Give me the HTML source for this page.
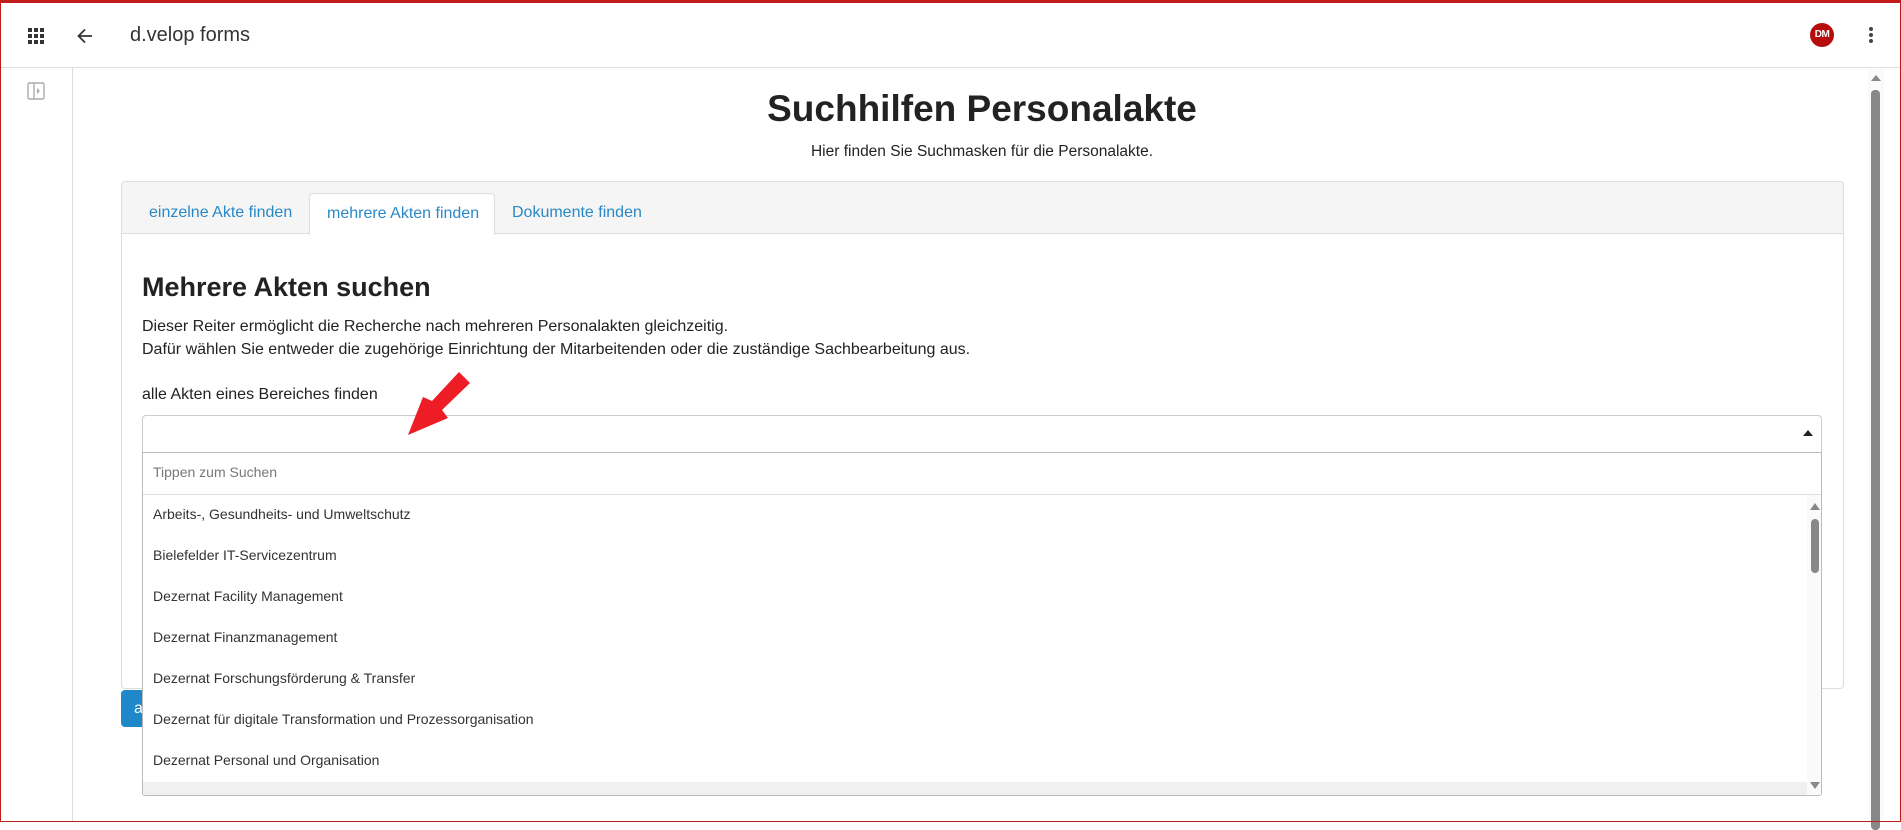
<!DOCTYPE html>
<html><head><meta charset="utf-8">
<style>
*{box-sizing:border-box;margin:0;padding:0}
body{width:1901px;height:822px;overflow:hidden;background:#fff;font-family:"Liberation Sans",Arial,sans-serif;color:#222;position:relative}
.frame{position:absolute;inset:0;border:1px solid #c21b1b;border-top:3px solid #c21b1b;pointer-events:none;z-index:50}
.hdr{position:absolute;left:0;top:0;width:1901px;height:68px;border-bottom:1px solid #ddd}
.side{position:absolute;left:0;top:68px;width:73px;height:754px;border-right:1px solid #ddd}
.abs{position:absolute}
.tab{position:absolute;top:193px;height:42px;line-height:40px;font-size:16px;color:#2a88c6;padding:0 17px;white-space:nowrap}
.item{position:absolute;left:153px;font-size:14px;color:#333;white-space:nowrap}
</style></head><body>
<div class="frame"></div>
<div class="hdr">
  <svg class="abs" style="left:28px;top:28px" width="16" height="16" viewBox="0 0 16 16" fill="#333">
    <rect x="0" y="0" width="4" height="4"/><rect x="6" y="0" width="4" height="4"/><rect x="12" y="0" width="4" height="4"/>
    <rect x="0" y="6" width="4" height="4"/><rect x="6" y="6" width="4" height="4"/><rect x="12" y="6" width="4" height="4"/>
    <rect x="0" y="12" width="4" height="4"/><rect x="6" y="12" width="4" height="4"/><rect x="12" y="12" width="4" height="4"/>
  </svg>
  <svg class="abs" style="left:76px;top:27px" width="18" height="18" viewBox="0 0 18 18"><path d="M16 9H3M9 2.5L2.5 9 9 15.5" stroke="#333" stroke-width="1.8" fill="none"/></svg>
  <div class="abs" style="left:130px;top:24px;font-size:20px;color:#333">d.velop forms</div>
  <div class="abs" style="left:1810px;top:23px;width:24px;height:24px;border-radius:50%;background:#b50d0d;color:#fff;font-size:10px;font-weight:bold;text-align:center;line-height:24px;letter-spacing:-0.5px">DM</div>
  <svg class="abs" style="left:1867px;top:26px" width="8" height="18"><circle cx="4" cy="3" r="2" fill="#444"/><circle cx="4" cy="9" r="2" fill="#444"/><circle cx="4" cy="15" r="2" fill="#444"/></svg>
</div>
<div class="side">
  <svg class="abs" style="left:27px;top:14px" width="18" height="18" viewBox="0 0 18 18"><rect x="1" y="1" width="16" height="16" rx="1.5" fill="none" stroke="#aaa" stroke-width="1.4"/><line x1="7" y1="1" x2="7" y2="17" stroke="#aaa" stroke-width="1.4"/><path d="M10 6l3 3-3 3z" fill="#aaa"/></svg>
</div>
<div class="abs" style="left:1868px;top:69px;width:16px;height:753px;background:#fafafa"></div>
<svg class="abs" style="left:1870px;top:74px" width="12" height="8"><path d="M1 7L6 1 11 7z" fill="#888"/></svg>
<div class="abs" style="left:1871px;top:90px;width:9px;height:740px;background:#888;border-radius:4px"></div>

<div class="abs" style="left:0;width:1964px;top:88px;text-align:center;font-size:37px;font-weight:bold;color:#222">Suchhilfen Personalakte</div>
<div class="abs" style="left:0;width:1964px;top:143px;text-align:center;font-size:15.5px;color:#222">Hier finden Sie Suchmasken für die Personalakte.</div>

<div class="abs" style="left:121px;top:181px;width:1723px;height:508px;border:1px solid #ddd;border-radius:4px;background:#fff"></div>
<div class="abs" style="left:122px;top:182px;width:1721px;height:52px;background:#f5f5f5;border-bottom:1px solid #ddd;border-radius:4px 4px 0 0"></div>
<div class="tab" style="left:132px">einzelne Akte finden</div>
<div class="tab" style="left:309px;width:186px;padding:0 0 0 17px;background:#fff;border:1px solid #ddd;border-bottom:none;border-radius:4px 4px 0 0">mehrere Akten finden</div>
<div class="tab" style="left:495px">Dokumente finden</div>

<div class="abs" style="left:142px;top:272px;font-size:27px;font-weight:bold;color:#222">Mehrere Akten suchen</div>
<div class="abs" style="left:142px;top:315px;font-size:16px;line-height:23px;color:#222;white-space:nowrap">Dieser Reiter ermöglicht die Recherche nach mehreren Personalakten gleichzeitig.<br>Dafür wählen Sie entweder die zugehörige Einrichtung der Mitarbeitenden oder die zuständige Sachbearbeitung aus.</div>
<div class="abs" style="left:142px;top:386px;font-size:16px;color:#222">alle Akten eines Bereiches finden</div>

<div class="abs" style="left:142px;top:415px;width:1680px;height:38px;border:1px solid #ccc;border-radius:4px 4px 0 0;background:#fff"></div>
<svg class="abs" style="left:1803px;top:430px" width="10" height="6"><path d="M0 6L5 0 10 6z" fill="#222"/></svg>

<div class="abs" style="left:142px;top:452px;width:1680px;height:344px;border:1px solid #bbb;border-radius:0 0 3px 3px;background:#fff;overflow:hidden">
  <div class="abs" style="left:0;top:0;width:1680px;height:42px;border-bottom:1px solid #ddd"></div>
  <div class="abs" style="left:0;top:329px;width:1664px;height:14px;background:#f0f0f0"></div>
  <div class="abs" style="left:1664px;top:42px;width:15px;height:300px;background:#fafafa"></div>
  <svg class="abs" style="left:1667px;top:50px" width="10" height="7"><path d="M0 7L5 0 10 7z" fill="#888"/></svg>
  <div class="abs" style="left:1668px;top:66px;width:8px;height:54px;background:#888;border-radius:4px"></div>
  <svg class="abs" style="left:1667px;top:329px" width="10" height="7"><path d="M0 0L5 7 10 0z" fill="#888"/></svg>
</div>
<div class="item" style="top:464px;color:#777">Tippen zum Suchen</div>
<div class="item" style="top:506px">Arbeits-, Gesundheits- und Umweltschutz</div>
<div class="item" style="top:547px">Bielefelder IT-Servicezentrum</div>
<div class="item" style="top:588px">Dezernat Facility Management</div>
<div class="item" style="top:629px">Dezernat Finanzmanagement</div>
<div class="item" style="top:670px">Dezernat Forschungsförderung &amp; Transfer</div>
<div class="item" style="top:711px">Dezernat für digitale Transformation und Prozessorganisation</div>
<div class="item" style="top:752px">Dezernat Personal und Organisation</div>

<div class="abs" style="left:121px;top:690px;width:21px;height:37px;background:#1e88c8;border-radius:4px 0 0 4px;color:#fff;font-size:16px;line-height:37px;padding-left:13px;overflow:hidden">a</div>

<svg class="abs" style="left:0;top:0" width="1901" height="822" viewBox="0 0 1901 822"><polygon points="459,372 470,383 442,410 448,418 408,435 423,397 432,401" fill="#ee1c25"/></svg>
</body></html>
